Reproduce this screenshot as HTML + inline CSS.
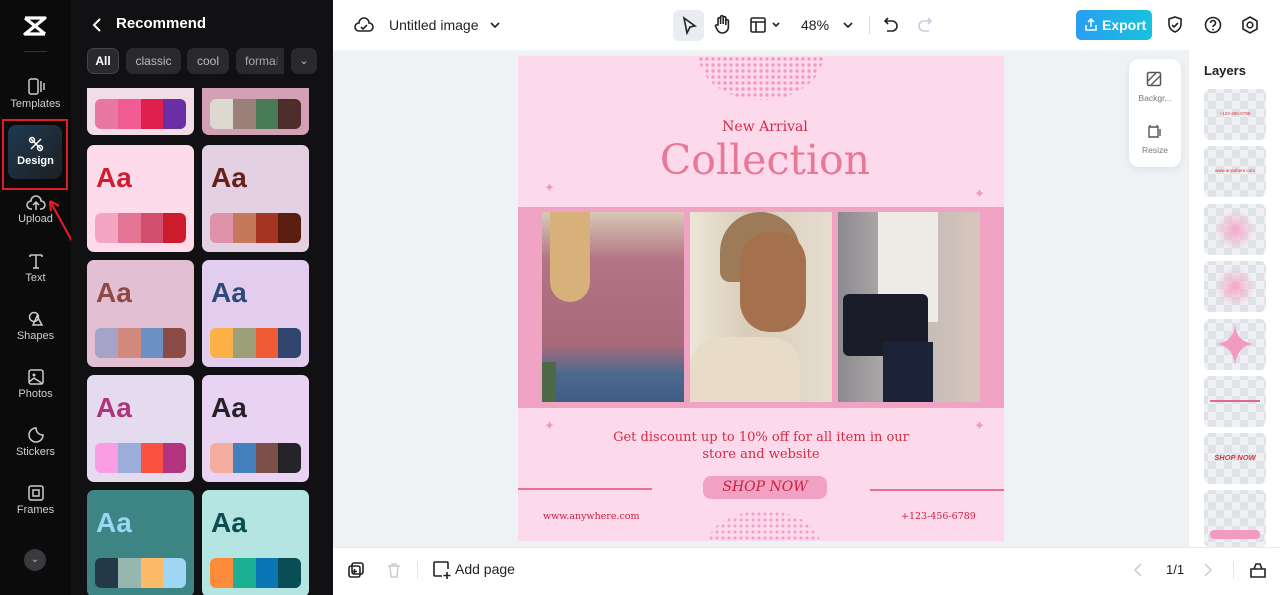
<!DOCTYPE html>
<html><head><meta charset="utf-8"><style>
*{margin:0;padding:0;box-sizing:border-box}
body{width:1280px;height:595px;overflow:hidden;position:relative;font-family:"Liberation Sans",sans-serif;background:#fff}
.a{position:absolute}
.side{left:0;top:0;width:71px;height:595px;background:#0b0b0c}
.panel{left:71px;top:0;width:262px;height:595px;background:#111113}
.nav{position:absolute;left:0;width:71px;text-align:center;color:#cfcfd3;font-size:11px}
.nav svg{display:block;margin:0 auto 2px}
.chip{position:absolute;top:48px;height:26px;border-radius:7px;background:#2a2a2e;color:#bcbcc2;font-size:12px;line-height:26px;text-align:center}
.scroll{position:absolute;left:71px;top:88px;width:262px;height:507px;overflow:hidden}
.card{position:absolute;width:107px;height:107px;border-radius:7px;overflow:hidden}
.card b{position:absolute;left:9px;top:17px;font-size:28px;font-weight:bold}
.pal{position:absolute;left:8px;top:68px;width:91px;height:30px;border-radius:6px;overflow:hidden;display:flex}
.pal i{flex:1}
.top{left:333px;top:0;width:947px;height:50px;background:#fff}
.stage{left:333px;top:50px;width:855px;height:497px;background:#eff2f5}
.poster{left:518px;top:56px;width:486px;height:485px;background:#fdd9ec;overflow:hidden}
.serif{font-family:"DejaVu Serif","Liberation Serif",serif}
.lay{position:absolute;left:1204px;width:62px;height:51px;border-radius:6px;background-color:#eef0f3;background-image:linear-gradient(45deg,#dfe2e6 25%,transparent 25%,transparent 75%,#dfe2e6 75%),linear-gradient(45deg,#dfe2e6 25%,transparent 25%,transparent 75%,#dfe2e6 75%);background-size:16px 16px;background-position:4px 4px,12px 12px;overflow:hidden}
.ic{stroke:#222;fill:none;stroke-width:1.6}
</style></head><body>
<div class="a side"></div>
<svg class="a" style="left:22px;top:14px" width="26" height="24" viewBox="0 0 26 24"><path d="M3 4h20L3 20h20M3 4l20 16" stroke="#fff" stroke-width="3.2" fill="none" stroke-linejoin="round"/></svg>
<div class="a" style="left:24px;top:51px;width:23px;height:1px;background:#333"></div>
<div class="nav" style="top:78px"><svg width="20" height="18" viewBox="0 0 20 18"><rect x="3" y="1" width="9" height="15" rx="2" stroke="#ccc" fill="none" stroke-width="1.5"/><path d="M15 3v11M18 5v7" stroke="#ccc" stroke-width="1.5"/></svg>Templates</div>
<div class="a" style="left:2px;top:119px;width:66px;height:71px;border:2px solid #e11d23"></div>
<div class="a" style="left:8px;top:125px;width:54px;height:54px;border-radius:8px;background:linear-gradient(135deg,#1f3a50,#1d1f24)"></div>
<div class="nav" style="top:136px;color:#fff;font-weight:bold"><svg width="18" height="17" viewBox="0 0 18 17"><path d="M4 3l10 10M14 3L4 13" stroke="#fff" stroke-width="1.5"/><circle cx="5" cy="4" r="2.5" stroke="#fff" fill="none" stroke-width="1.4"/><circle cx="13" cy="12" r="2.5" stroke="#fff" fill="none" stroke-width="1.4"/></svg>Design</div>
<div class="nav" style="top:195px"><svg width="20" height="16" viewBox="0 0 20 16"><path d="M6 14H5a4 4 0 0 1 0-8 5 5 0 0 1 10 0 4 4 0 0 1 0 8h-1M10 15V8M7 10l3-3 3 3" stroke="#ccc" fill="none" stroke-width="1.5"/></svg>Upload</div>
<svg class="a" style="left:44px;top:195px" width="32" height="50" viewBox="0 0 32 50"><path d="M28 46L6 6M6 6l1 10M6 6l9 5" stroke="#e11d23" stroke-width="2.2" fill="none"/></svg>
<div class="nav" style="top:252px"><svg width="18" height="18" viewBox="0 0 18 18"><path d="M3 3h12M9 3v13M3 3v2M15 3v2M6 16h6" stroke="#ccc" stroke-width="1.5" fill="none"/></svg>Text</div>
<div class="nav" style="top:310px"><svg width="18" height="18" viewBox="0 0 18 18"><circle cx="7" cy="7" r="4.5" stroke="#ccc" fill="none" stroke-width="1.5"/><path d="M10 6l5 9H6z" stroke="#ccc" fill="none" stroke-width="1.5"/></svg>Shapes</div>
<div class="nav" style="top:368px"><svg width="18" height="18" viewBox="0 0 18 18"><rect x="2" y="2" width="14" height="14" rx="2" stroke="#ccc" fill="none" stroke-width="1.5"/><circle cx="7" cy="7" r="1.5" fill="#ccc"/><path d="M2 14l5-4 9 6" stroke="#ccc" fill="none" stroke-width="1.5"/></svg>Photos</div>
<div class="nav" style="top:426px"><svg width="18" height="18" viewBox="0 0 18 18"><path d="M16 9a7 7 0 1 1-7-7c0 4 3 7 7 7z" stroke="#ccc" fill="none" stroke-width="1.5"/></svg>Stickers</div>
<div class="nav" style="top:484px"><svg width="18" height="18" viewBox="0 0 18 18"><rect x="2" y="2" width="14" height="14" rx="2" stroke="#ccc" fill="none" stroke-width="1.5"/><rect x="6" y="6" width="6" height="6" stroke="#ccc" fill="none" stroke-width="1.5"/></svg>Frames</div>
<div class="a" style="left:24px;top:549px;width:22px;height:22px;border-radius:50%;background:#3a3a3e;color:#bbb;font-size:10px;text-align:center;line-height:22px">⌄</div>

<div class="a panel"></div>
<svg class="a" style="left:91px;top:17px" width="12" height="16" viewBox="0 0 12 16"><path d="M9 2L3 8l6 6" stroke="#fff" stroke-width="2" fill="none"/></svg>
<div class="a" style="left:116px;top:15px;color:#fff;font-size:15px;font-weight:bold">Recommend</div>
<div class="chip" style="left:87px;width:32px;background:#2a2a2e;border:1px solid #444;color:#fff;font-weight:bold;line-height:24px">All</div>
<div class="chip" style="left:126px;width:55px">classic</div>
<div class="chip" style="left:187px;width:42px">cool</div>
<div class="chip" style="left:236px;width:48px;border-radius:7px 0 0 7px;text-align:left;padding-left:9px;color:#aaa">forma<span style="color:#555">l</span></div>
<div class="chip" style="left:291px;width:26px;font-size:11px">⌄</div>

<div class="scroll">
<div class="card" style="left:16px;top:-59px;height:106px;background:#f0dde8"><div class="pal" style="top:70px"><i style="background:#e878a2"></i><i style="background:#f05b91"></i><i style="background:#e01f4f"></i><i style="background:#6a2fa5"></i></div></div>
<div class="card" style="left:131px;top:-59px;height:106px;background:#d3a1b4"><div class="pal" style="top:70px"><i style="background:#ddd8d0"></i><i style="background:#9a8078"></i><i style="background:#487a55"></i><i style="background:#4e2d2c"></i></div></div>
<div class="card" style="left:16px;top:57px;background:#fddbeb"><b style="color:#cf1f2f">Aa</b><div class="pal"><i style="background:#f3a5c2"></i><i style="background:#e57597"></i><i style="background:#d14e6d"></i><i style="background:#cc1b2c"></i></div></div>
<div class="card" style="left:131px;top:57px;background:#e3d0e3"><b style="color:#66201a">Aa</b><div class="pal"><i style="background:#de93ab"></i><i style="background:#c6785a"></i><i style="background:#a53422"></i><i style="background:#5a1e10"></i></div></div>
<div class="card" style="left:16px;top:172px;background:#e2bfd3"><b style="color:#8c4a42">Aa</b><div class="pal"><i style="background:#a5a3c8"></i><i style="background:#d28a7d"></i><i style="background:#6b90c3"></i><i style="background:#8a4c45"></i></div></div>
<div class="card" style="left:131px;top:172px;background:#e3cdee"><b style="color:#2f4a78">Aa</b><div class="pal"><i style="background:#fdb048"></i><i style="background:#9c9f78"></i><i style="background:#ef5b37"></i><i style="background:#31466f"></i></div></div>
<div class="card" style="left:16px;top:287px;background:#e5dbee"><b style="color:#b0337e">Aa</b><div class="pal"><i style="background:#fb9de5"></i><i style="background:#9dadd9"></i><i style="background:#f95241"></i><i style="background:#b3357f"></i></div></div>
<div class="card" style="left:131px;top:287px;background:#e8d3f2"><b style="color:#252228">Aa</b><div class="pal"><i style="background:#f3aea0"></i><i style="background:#4480bc"></i><i style="background:#7a5048"></i><i style="background:#252429"></i></div></div>
<div class="card" style="left:16px;top:402px;background:#3d8585"><b style="color:#9bd6f4">Aa</b><div class="pal"><i style="background:#243948"></i><i style="background:#95b7b0"></i><i style="background:#fdbb6a"></i><i style="background:#9fd5f5"></i></div></div>
<div class="card" style="left:131px;top:402px;background:#b4e5e2"><b style="color:#0c4d4f">Aa</b><div class="pal"><i style="background:#fd8b3a"></i><i style="background:#1caf92"></i><i style="background:#0a76b5"></i><i style="background:#0a4e55"></i></div></div>
</div>
<div class="a" style="left:333px;top:273px;width:7px;height:48px;border-radius:0 5px 5px 0;background:#333"></div>

<div class="a top"></div>
<svg class="a" style="left:354px;top:16px" width="20" height="18" viewBox="0 0 20 18"><path d="M6 15H5a4 4 0 0 1 0-8 5 5 0 0 1 10 0 4 4 0 0 1 0 8H6zM7 11l2 2 4-4" class="ic"/></svg>
<div class="a" style="left:389px;top:17px;font-size:14px;color:#222">Untitled image</div>
<svg class="a" style="left:489px;top:20px" width="12" height="10"><path d="M2 3l4 4 4-4" class="ic"/></svg>
<div class="a" style="left:673px;top:10px;width:31px;height:31px;border-radius:6px;background:#e9ecf0"></div>
<svg class="a" style="left:681px;top:16px" width="16" height="19"><path d="M3 2l11 8-5 1-3 6z" class="ic"/></svg>
<svg class="a" style="left:713px;top:14px" width="18" height="22"><path d="M5 11V5a1.3 1.3 0 0 1 2.6 0v5V3a1.3 1.3 0 0 1 2.6 0v7V4a1.3 1.3 0 0 1 2.6 0v7-4a1.3 1.3 0 0 1 2.6 0v6a6 6 0 0 1-6 6 6 6 0 0 1-5-3l-2-4a1.3 1.3 0 0 1 2-1z" class="ic" stroke-width="1.4"/></svg>
<svg class="a" style="left:750px;top:16px" width="32" height="18"><rect x="1" y="2" width="14" height="14" rx="1.5" class="ic"/><path d="M1 6h14M6 6v10M23 7l3 3 3-3" class="ic"/></svg>
<div class="a" style="left:801px;top:17px;font-size:14px;color:#222">48%</div>
<svg class="a" style="left:842px;top:20px" width="12" height="10"><path d="M2 3l4 4 4-4" class="ic"/></svg>
<div class="a" style="left:869px;top:16px;width:1px;height:18px;background:#ddd"></div>
<svg class="a" style="left:882px;top:15px" width="18" height="20"><path d="M6 3L3 6l3 3M3 6h7a5 5 0 0 1 0 10H5" class="ic"/></svg>
<svg class="a" style="left:916px;top:15px" width="18" height="20"><path d="M12 3l3 3-3 3M15 6H8a5 5 0 0 0 0 10h5" class="ic" style="stroke:#ccd"/></svg>
<div class="a" style="left:1076px;top:10px;width:76px;height:30px;border-radius:5px;background:linear-gradient(90deg,#2a9df4,#17c3dd);color:#fff;font-size:14px;font-weight:bold;line-height:30px;padding-left:26px">Export</div>
<svg class="a" style="left:1084px;top:17px" width="14" height="15"><path d="M7 10V2M4 5l3-3 3 3M2 8v5h10V8" stroke="#fff" fill="none" stroke-width="1.5"/></svg>
<svg class="a" style="left:1166px;top:15px" width="18" height="20"><path d="M9 2l6 2v5c0 4-3 7-6 8-3-1-6-4-6-8V4zM6 10l2 2 4-4" class="ic"/></svg>
<svg class="a" style="left:1203px;top:15px" width="20" height="20"><circle cx="10" cy="10" r="7.5" class="ic"/><path d="M7.5 8a2.5 2.5 0 1 1 3.5 2.3c-.7.3-1 .8-1 1.7" class="ic"/><circle cx="10" cy="14.5" r=".9" fill="#222"/></svg>
<svg class="a" style="left:1240px;top:15px" width="20" height="20"><path d="M10 2l7 4v8l-7 4-7-4V6z" class="ic"/><circle cx="10" cy="10" r="2.8" class="ic"/></svg>

<div class="a stage"></div>
<div class="a poster">
  <svg class="a" style="left:180px;top:0" width="126" height="45"><defs><pattern id="d" width="6" height="6" patternUnits="userSpaceOnUse"><circle cx="3" cy="3" r="1.7" fill="#f39ac2"/></pattern></defs><ellipse cx="63" cy="0" rx="62" ry="44" fill="url(#d)"/></svg>
  <div class="a serif" style="left:0;width:494px;text-align:center;top:63px;font-size:14px;color:#d62a45">New Arrival</div>
  <div class="a serif" style="left:0;width:494px;text-align:center;top:80px;font-size:41px;color:#e77896">Collection</div>
  <div class="a" style="left:26px;top:124px;color:#f29ac0;font-size:13px">✦</div>
  <div class="a" style="left:456px;top:130px;color:#f29ac0;font-size:13px">✦</div>
  <div class="a" style="left:0;top:151px;width:486px;height:201px;background:#f1a3c3"></div>
  <div class="a" style="left:24px;top:156px;width:142px;height:190px;background:linear-gradient(180deg,#d8c9b6 0%,#b37485 25%,#a76a7a 70%,#4d6a8e 85%,#3e5d82 100%)"><div class="a" style="left:8px;top:0;width:40px;height:90px;border-radius:0 0 20px 20px;background:#d8b07a"></div><div class="a" style="left:0;top:150px;width:14px;height:40px;background:#4c6a45"></div></div>
  <div class="a" style="left:172px;top:156px;width:142px;height:190px;background:linear-gradient(90deg,#ede6d8 0%,#d9cdb9 40%,#e6ddd0 100%)"><div class="a" style="left:30px;top:0;width:80px;height:70px;border-radius:40px 40px 10px 10px;background:#9d7b58"></div><div class="a" style="left:50px;top:20px;width:66px;height:100px;border-radius:30px;background:#a4704e"></div><div class="a" style="left:0;top:125px;width:110px;height:65px;border-radius:30px 30px 0 0;background:#e8dcc8"></div></div>
  <div class="a" style="left:320px;top:156px;width:142px;height:190px;background:linear-gradient(90deg,#8b8a8f,#bfb9b5 50%,#d8c6bd)"><div class="a" style="left:40px;top:0;width:60px;height:110px;background:#eeeae5"></div><div class="a" style="left:5px;top:82px;width:85px;height:62px;border-radius:6px;background:#1a1c2a"></div><div class="a" style="left:45px;top:130px;width:50px;height:60px;background:#1c2238"></div></div>
  <div class="a" style="left:26px;top:362px;color:#f29ac0;font-size:13px">✦</div>
  <div class="a" style="left:456px;top:362px;color:#f29ac0;font-size:13px">✦</div>
  <div class="a serif" style="left:0;width:486px;text-align:center;top:373px;font-size:13px;line-height:17px;color:#d62a45">Get discount up to 10% off for all item in our<br>store and website</div>
  <div class="a" style="left:0;top:432px;width:134px;height:2px;background:#ec6f93"></div>
  <div class="a" style="left:352px;top:433px;width:134px;height:2px;background:#ec6f93"></div>
  <div class="a serif" style="left:185px;top:420px;width:124px;height:23px;border-radius:8px;background:#f1a2c2;color:#cc2040;font-style:italic;font-size:14px;text-align:center;line-height:23px">SHOP NOW</div>
  <div class="a serif" style="left:25px;top:455px;font-size:9.5px;color:#cc2040">www.anywhere.com</div>
  <div class="a serif" style="left:383px;top:455px;font-size:9.5px;color:#cc2040">+123-456-6789</div>
  <svg class="a" style="left:190px;top:455px" width="112" height="30"><defs><pattern id="d2" width="6" height="6" patternUnits="userSpaceOnUse"><circle cx="3" cy="3" r="1.5" fill="#f4a0c6"/></pattern></defs><ellipse cx="56" cy="32" rx="56" ry="32" fill="url(#d2)"/></svg>
</div>
<div class="a" style="left:1129px;top:59px;width:52px;height:108px;border-radius:10px;background:#fff;box-shadow:0 2px 8px rgba(0,0,0,.08)"></div>
<svg class="a" style="left:1146px;top:71px" width="16" height="16"><rect x="1.5" y="1.5" width="13" height="13" rx="1.5" stroke="#555" fill="none" stroke-width="1.5"/><path d="M2 10l8-8M5 14l9-9" stroke="#555" stroke-width="1.4"/></svg>
<div class="a" style="left:1129px;top:93px;width:52px;text-align:center;font-size:8.5px;color:#777">Backgr...</div>
<svg class="a" style="left:1146px;top:124px" width="16" height="16"><path d="M3 3h9v10H3zM4 1v2M11 1v2M14 5v7" stroke="#555" fill="none" stroke-width="1.4"/></svg>
<div class="a" style="left:1129px;top:145px;width:52px;text-align:center;font-size:8.5px;color:#777">Resize</div>

<div class="a" style="left:1188px;top:50px;width:92px;height:497px;background:#fff;border-left:1px solid #eceef1"></div>
<div class="a" style="left:1204px;top:63px;font-size:13px;font-weight:bold;color:#222">Layers</div>
<div class="lay" style="top:89px"><div style="position:absolute;top:22px;width:100%;text-align:center;font-size:4.5px;color:#d33">+123-456-6789</div></div>
<div class="lay" style="top:146px"><div style="position:absolute;top:22px;width:100%;text-align:center;font-size:4.5px;color:#d33">www.anywhere.com</div></div>
<div class="lay" style="top:204px"><div style="position:absolute;left:11px;top:6px;width:40px;height:40px;border-radius:50%;background:radial-gradient(#f6a8c8,rgba(246,168,200,0) 70%)"></div></div>
<div class="lay" style="top:261px"><div style="position:absolute;left:11px;top:6px;width:40px;height:40px;border-radius:50%;background:radial-gradient(#f6a8c8,rgba(246,168,200,0) 70%)"></div></div>
<div class="lay" style="top:319px"><svg width="62" height="51"><path d="M31 6Q33 23 50 25 33 27 31 46 29 27 12 25 29 23 31 6z" fill="#f29ac0"/></svg></div>
<div class="lay" style="top:376px"><div style="position:absolute;left:6px;top:24px;width:50px;height:1.5px;background:#e0688e"></div></div>
<div class="lay" style="top:433px"><div style="position:absolute;top:20px;width:100%;text-align:center;font-size:7.5px;color:#d33;font-style:italic;font-weight:bold">SHOP NOW</div></div>
<div class="lay" style="top:490px;height:57px"><div style="position:absolute;left:6px;top:40px;width:50px;height:9px;border-radius:4px;background:#f29ac0"></div></div>

<div class="a" style="left:333px;top:547px;width:947px;height:48px;background:#fff;border-top:1px solid #e8eaed"></div>
<svg class="a" style="left:347px;top:561px" width="18" height="18"><rect x="5" y="2" width="11" height="11" rx="2" class="ic"/><rect x="2" y="5" width="11" height="11" rx="2" class="ic" fill="#fff"/><path d="M7.5 8v5M5 10.5h5" class="ic"/></svg>
<svg class="a" style="left:385px;top:561px" width="18" height="18"><path d="M3 5h12M7 5V3h4v2M5 5l1 11h6l1-11" stroke="#ccc" fill="none" stroke-width="1.5"/></svg>
<div class="a" style="left:417px;top:561px;width:1px;height:18px;background:#e5e5e5"></div>
<svg class="a" style="left:432px;top:560px" width="20" height="20"><path d="M16 9V3a1 1 0 0 0-1-1H3a1 1 0 0 0-1 1v12a1 1 0 0 0 1 1h7M15 12v7M11.5 15.5h7" class="ic" stroke-width="1.7"/></svg>
<div class="a" style="left:455px;top:561px;font-size:14px;color:#222">Add page</div>
<svg class="a" style="left:1132px;top:562px" width="12" height="16"><path d="M9 2L3 8l6 6" stroke="#ccc" fill="none" stroke-width="1.5"/></svg>
<div class="a" style="left:1166px;top:562px;font-size:13px;color:#222">1/1</div>
<svg class="a" style="left:1202px;top:562px" width="12" height="16"><path d="M3 2l6 6-6 6" stroke="#ccc" fill="none" stroke-width="1.5"/></svg>
<div class="a" style="left:1233px;top:561px;width:1px;height:18px;background:#e5e5e5"></div>
<svg class="a" style="left:1248px;top:560px" width="20" height="20"><path d="M3 9h14v8H3zM6 9l2-5h4l2 5" class="ic" stroke-width="1.8"/></svg>
</body></html>
